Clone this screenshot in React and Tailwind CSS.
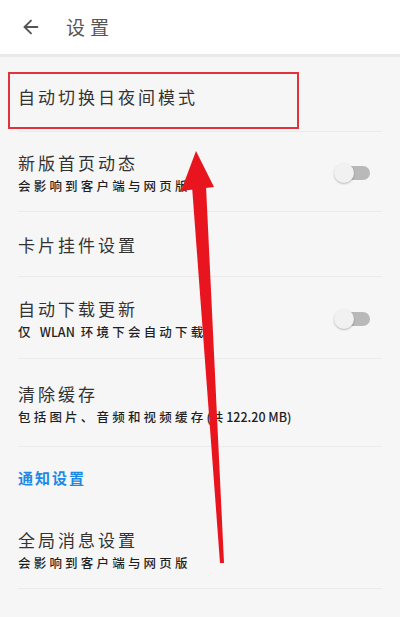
import { ArrowLeft } from "lucide-react";

const font = { fontFamily: '"Noto Sans CJK SC", "Noto Sans", sans-serif' };

function Toggle() {
  return (
    <div className="relative h-[20px] w-[36px]">
      <div className="absolute right-0 top-[3px] h-[14px] w-[28px] rounded-full bg-[#b9b9b9]" />
      <div className="absolute left-0 top-0 h-[20px] w-[20px] rounded-full bg-[#f1f1f1] shadow-[0_1px_2px_rgba(0,0,0,0.25)]" />
    </div>
  );
}

function Row({ title, subtitle, toggle, className = "" }) {
  return (
    <div className={`mx-[18px] flex items-center justify-between border-b border-[#ebebeb] ${className}`}>
      <div className="flex flex-col">
        <span className="text-[17px] leading-[24px] tracking-[3px] text-[#333]">{title}</span>
        {subtitle ? (
          <span className="mt-[2px] text-[12.5px] font-medium leading-[18px] tracking-[3.2px] text-[#1f1f1f]">
            {subtitle}
          </span>
        ) : null}
      </div>
      {toggle ? (
        <div className="mr-[12px]">
          <Toggle />
        </div>
      ) : null}
    </div>
  );
}

export default function App() {
  return (
    <div className="relative h-[617px] w-[400px] overflow-hidden bg-[#f6f6f6]" style={font}>
      <header className="flex h-[57px] items-center gap-[24px] border-b-[3px] border-[#e9e9e9] bg-white pl-[20px]">
        <ArrowLeft size={22} strokeWidth={2} className="text-[#555]" />
        <span className="text-[19px] tracking-[5px] text-[#555]">设置</span>
      </header>

      <Row title="自动切换日夜间模式" className="h-[75px] pt-[6px]" />
      <Row title="新版首页动态" subtitle="会影响到客户端与网页版" toggle className="h-[80px] pt-[2px]" />
      <Row title="卡片挂件设置" className="h-[65px] pt-[2px]" />
      <Row
        title="自动下载更新"
        subtitle={
          <>
            仅 <span className="tracking-normal">WLAN</span> 环境下会自动下载
          </>
        }
        toggle
        className="h-[82px] pt-[2px]"
      />
      <Row
        title="清除缓存"
        subtitle={
          <>
            包括图片、音频和视频缓存<span className="tracking-normal">(共 122.20 MB)</span>
          </>
        }
        className="h-[88px] pt-[2px]"
      />

      <div className="flex h-[60px] items-center px-[18px] pt-[2px]">
        <span className="text-[15px] font-bold tracking-[2px] text-[#1e88e5]">通知设置</span>
      </div>

      <Row title="全局消息设置" subtitle="会影响到客户端与网页版" className="h-[82px] pt-[4px]" />

      {/* annotation: red highlight box */}
      <div className="absolute left-[8px] top-[72px] h-[57px] w-[291px] border-2 border-[#e2323c]" />

      {/* annotation: red arrow */}
      <svg className="absolute left-0 top-0" width="400" height="617" viewBox="0 0 400 617">
        <polygon points="196,151 181,191 214,187" fill="#e8141e" />
        <polygon points="192,186 206,186 224,563 220,563" fill="#e8141e" />
      </svg>
    </div>
  );
}
